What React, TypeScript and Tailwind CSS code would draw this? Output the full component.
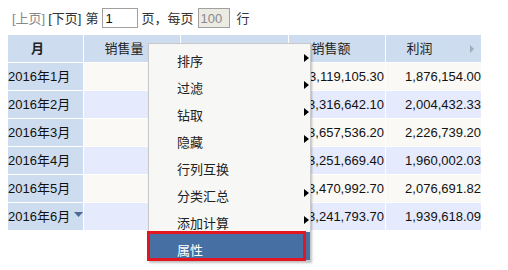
import React from "react";

const rows: [string, string, string, string][] = [
  ["2016年1月", "1,525", "13,119,105.30", "1,876,154.00"],
  ["2016年2月", "1,701", "13,316,642.10", "2,004,432.33"],
  ["2016年3月", "1,930", "13,657,536.20", "2,226,739.20"],
  ["2016年4月", "1,614", "13,251,669.40", "1,960,002.03"],
  ["2016年5月", "1,802", "13,470,992.70", "2,076,691.82"],
  ["2016年6月", "1,597", "13,241,793.70", "1,939,618.09"],
];

const menuItems: { label: string; arrow: boolean }[] = [
  { label: "排序", arrow: true },
  { label: "过滤", arrow: true },
  { label: "钻取", arrow: true },
  { label: "隐藏", arrow: true },
  { label: "行列互换", arrow: false },
  { label: "分类汇总", arrow: true },
  { label: "添加计算", arrow: true },
];

function RightArrow() {
  return (
    <svg width="5" height="8" viewBox="0 0 5 8" className="block">
      <polygon points="0,0 5,4 0,8" fill="#000" />
    </svg>
  );
}

export default function App() {
  return (
    <div className="relative w-[508px] h-[270px] pt-[8px] bg-white text-[13px] text-[#222] font-['Liberation_Sans','Noto_Sans_CJK_SC',sans-serif] leading-none">
      {/* toolbar */}
      <div className="flex items-center h-[20px] ml-[12px]">
        <span className="text-[#888]">[上页]</span>
        <span className="ml-[3px] text-[#333]">[下页]</span>
        <span className="ml-[4px] text-[#333]">第</span>
        <input
          readOnly
          value="1"
          className="ml-[4px] w-[36px] h-[20px] border border-[#a0a0a0] bg-white pl-[2px] text-[13px] text-[#111] outline-none"
        />
        <span className="ml-[3px] text-[#333]">页，每页</span>
        <input
          readOnly
          value="100"
          className="ml-[4px] w-[32px] h-[20px] border border-[#a0a0a0] bg-[#ebebe4] pl-[2px] text-[13px] text-[#8a8a8a] outline-none"
        />
        <span className="ml-[7px] text-[#333]">行</span>
      </div>

      {/* table */}
      <div className="mt-[7px] ml-[8px] grid grid-cols-[75px_96px_107px_96px_95px] auto-rows-[27px] gap-px bg-white w-[473px] whitespace-nowrap">
        <div className="bg-[#cddcee] flex items-center justify-center pr-[16px] font-bold">月</div>
        <div className="bg-[#cddcee] flex items-center justify-center pr-[16px]">销售量</div>
        <div className="bg-[#cddcee]" />
        <div className="bg-[#cddcee] flex items-center justify-center pr-[12px]">销售额</div>
        <div className="bg-[#cddcee] relative flex items-center justify-center pr-[28px]">
          利润
          <svg width="4" height="8" viewBox="0 0 4 8" className="absolute right-[7px] top-[10px]">
            <polygon points="0,0 4,4 0,8" fill="#a3abb9" />
          </svg>
        </div>
        {rows.map((r, i) => {
          const bg = i % 2 === 0 ? "bg-[#faf9f5]" : "bg-[#e5eafd]";
          return (
            <React.Fragment key={r[0]}>
              <div className="bg-[#cddcee] flex items-center text-[#111]">
                {r[0]}
                {i === 5 && (
                  <svg width="9" height="5" viewBox="0 0 9 5" className="ml-[4px] -mt-[4px] shrink-0">
                    <polygon points="0,0 9,0 4.5,5" fill="#4a6a98" />
                  </svg>
                )}
              </div>
              <div className={`${bg} flex items-center justify-end text-[#111]`}>{r[1]}</div>
              <div className={bg} />
              <div className={`${bg} flex items-center justify-end pr-[1px] text-[#111] overflow-hidden`}>{r[2]}</div>
              <div className={`${bg} flex items-center justify-end text-[#111] overflow-hidden`}>{r[3]}</div>
            </React.Fragment>
          );
        })}
      </div>

      {/* context menu */}
      <div className="absolute left-[148px] top-[43px] w-[163px] bg-[#f7f7f5] border border-[#c9c9c9] shadow-[1px_2px_2px_rgba(0,0,0,0.25)] pt-[4px] flex flex-col">
        {menuItems.map((m) => (
          <div key={m.label} className="relative h-[27px] flex items-center pl-[28px] text-[#222]">
            {m.label}
            {m.arrow && (
              <span className="absolute right-[1px] top-[6px]">
                <RightArrow />
              </span>
            )}
          </div>
        ))}
        <div className="relative -mt-[5px] h-[28px] bg-[#466fa3] flex items-center pl-[28px] pt-[8px] text-white">
          属性
        </div>
        <div className="absolute left-[-2px] top-[187px] w-[159px] h-[30px] border-[3px] border-[#e3151f]" />
      </div>
    </div>
  );
}
